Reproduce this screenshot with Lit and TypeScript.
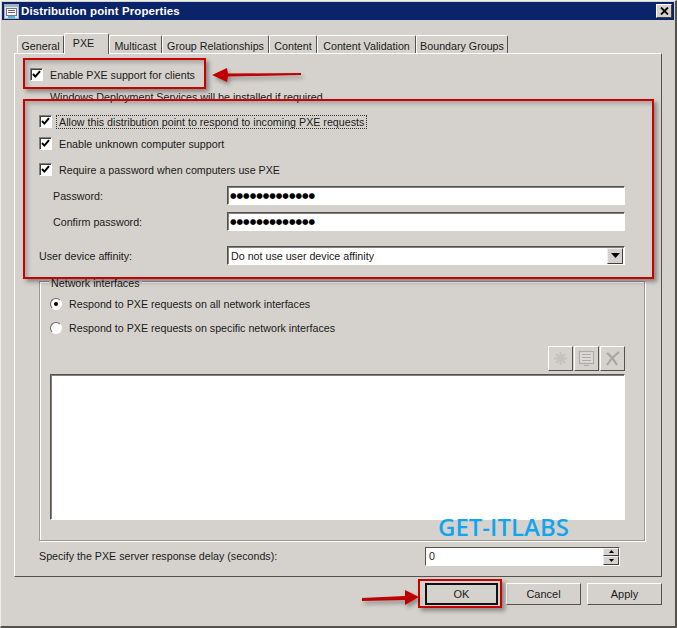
import { LitElement, html, css, svg } from "lit";
import { customElement } from "lit/decorators.js";

const check = svg`<svg viewBox="0 0 9 9" width="9" height="9"><path d="M1 4 L3.4 6.600 L8 1.200" fill="none" stroke="#000" stroke-width="2"/></svg>`;

@customElement("app-root")
export class AppRoot extends LitElement {
  static styles = css`
    :host { display: block; width: 677px; height: 628px; position: relative; overflow: hidden;
      font-family: "Liberation Sans", Arial, sans-serif; font-size: 10.7px; color: #1a1a1a; background: #d5d2cd; }
    * { box-sizing: border-box; }
    .win { height: 628px; display: flex; flex-direction: column; padding: 1px 1px 0 1px;
      border-left: 1px solid #eee; border-top: 1px solid #eee; border-right: 2px solid #55524e; border-bottom: 2px solid #55524e; }
    .title { height: 18px; flex: none; background: #0a246a; color: #fff; display: flex; align-items: center; font-weight: 700; font-size: 11.5px; letter-spacing: 0.1px; padding: 0 2px 0 2px; gap: 2px; }
    .title .sp { flex: 1; }
    .close { width: 16px; height: 14px; background: #d5d2cd; border: 1px solid; border-color: #fff #404040 #404040 #fff; display: flex; align-items: center; justify-content: center; }
    .content { flex: 1; padding: 15px 12px 0 12px; display: flex; flex-direction: column; }
    .tabs { display: flex; height: 18px; padding-left: 3px; align-items: flex-start; flex: none; position: relative; z-index: 1; }
    .tab { height: 18px; white-space: nowrap; border: 1px solid; border-color: #fff #55524e transparent #fff; border-bottom: 0; border-radius: 2px 2px 0 0; display: flex; align-items: center; justify-content: center; background: #d5d2cd; padding-top: 2px; }
    .tab.on { height: 21px; margin-top: -2px; padding: 0 6px 3px 0; }
    .panel { height: 524px; flex: none; border: 1px solid; border-color: #fff #55524e #55524e #fff; padding: 14px 16px 0 14px; display: flex; flex-direction: column; }
    .row { display: flex; align-items: center; }
    .cb { width: 13px; height: 13px; flex: none; background: #fff; border: 1px solid; border-color: #808080 #fff #fff #808080; box-shadow: inset 1px 1px 0 #404040; display: flex; align-items: center; justify-content: center; }
    .first { height: 13px; gap: 7px; margin-left: 1px; }
    .note { margin: 9px 0 0 21px; height: 14px; line-height: 14px; white-space: nowrap; }
    .sec { padding-left: 10px; margin-top: 11px; display: flex; flex-direction: column; }
    .chk { height: 13px; gap: 7px; }
    .focus { outline: 1px dotted #333; padding: 0 2px; margin-left: -2px; }
    .gap1 { height: 9px; }
    .gap2 { height: 13px; }
    .fld { height: 19px; margin-top: 7px; }
    .fld.pw { margin-top: 10px; }
    .fld.aff { margin-top: 15px; }
    .fld label { width: 188px; flex: none; }
    .fld .ind { padding: 1px 0 0 14px; }
    .inp { width: 398px; height: 19px; background: #fff; border: 1px solid; border-color: #55524e #fff #fff #55524e; box-shadow: inset 1px 1px 0 #808080; display: flex; align-items: center; padding-left: 3px; }
    .dots { font-family: "DejaVu Sans", sans-serif; font-size: 7.5px; letter-spacing: 0; padding-left: 2px; color: #000; }
    .sel { justify-content: space-between; padding-right: 1px; }
    .drop { width: 16px; height: 16px; background: #d5d2cd; border: 1px solid; border-color: #eee #404040 #404040 #eee; display: flex; align-items: center; justify-content: center; }
    .group { height: 260px; flex: none; border: 1px solid #9a9793; box-shadow: 1px 1px 0 #fff, inset 1px 1px 0 #fff; margin: 16px 0 0 10px; position: relative; padding: 15px 19px 0 10px; display: flex; flex-direction: column; }
    .legend { position: absolute; top: -5px; left: 9px; background: #d5d2cd; padding: 0 2px; line-height: 13px; }
    .radio { height: 13px; gap: 7px; }
    .rad2 { margin-top: 11px; }
    .rb { width: 12px; height: 12px; flex: none; border-radius: 50%; background: #fff; border: 1px solid; border-color: #666 #fff #fff #666; display: flex; align-items: center; justify-content: center; }
    .rb i { width: 4px; height: 4px; border-radius: 50%; background: #000; }
    .tools { display: flex; justify-content: flex-end; gap: 1px; margin-top: 12px; height: 25px; flex: none; }
    .tb { width: 25px; height: 25px; border: 1px solid; border-color: #fff #55524e #55524e #fff; display: flex; align-items: center; justify-content: center; }
    .list { height: 146px; flex: none; margin-top: 3px; background: #fff; border: 1px solid; border-color: #55524e #fff #fff #55524e; box-shadow: inset 1px 1px 0 #808080; }
    .delay { margin: 5px 0 0 10px; height: 20px; justify-content: space-between; }
    .spin { width: 195px; height: 19px; margin-right: 25px; background: #fff; border: 1px solid; border-color: #55524e #fff #fff #55524e; display: flex; align-items: center; justify-content: space-between; padding-left: 3px; }
    .arrows { width: 16px; height: 17px; display: flex; flex-direction: column; }
    .arrows span { flex: 1; background: #d5d2cd; border: 1px solid; border-color: #eee #404040 #404040 #eee; display: flex; align-items: center; justify-content: center; }
    .btns { display: flex; justify-content: flex-end; margin-top: 6px; }
    .btn { width: 75px; height: 22px; margin-left: 6px; border: 1px solid; border-color: #fff #55524e #55524e #fff; display: flex; align-items: center; justify-content: center; background: #d5d2cd; font-size: 11px; }
    .btn.def { width: 73px; margin-right: 2px; border: 2px solid #111; }
    .over { position: absolute; inset: 0; pointer-events: none; }
    .rbox { position: absolute; border: 2px solid #c80000; box-shadow: 3px 3px 4px rgba(0,0,0,.35), inset 3px 3px 4px rgba(0,0,0,.2); }
    .b1 { left: 23px; top: 58px; width: 183px; height: 31px; }
    .b2 { left: 23px; top: 99px; width: 631px; height: 180px; }
    .b3 { left: 418px; top: 579px; width: 84px; height: 29px; box-shadow: 3px 3px 4px rgba(0,0,0,.35); }
    .ovsvg { position: absolute; inset: 0; filter: drop-shadow(2px 3px 2px rgba(0,0,0,.35)); }
    .mark { position: absolute; left: 438px; top: 510px; font-size: 24px; font-weight: 600; line-height: 34px; color: #12a5ee; font-family: "Open Sans", sans-serif; }
  `;

  private chk(label: string, focus = false) {
    return html`<div class="row chk"><span class="cb">${check}</span><span class=${focus ? "focus" : ""}>${label}</span></div>`;
  }

  render() {
    const tabs: [string, number, boolean][] = [
      ["General", 47, false], ["PXE", 45, true], ["Multicast", 53, false], ["Group Relationships", 107, false],
      ["Content", 48, false], ["Content Validation", 99, false], ["Boundary Groups", 92, false],
    ];
    const dots = "●●●●●●●●●●●●●";
    return html`
      <div class="win">
        <div class="title">
          <svg width="15" height="15" viewBox="0 0 15 15"><rect x="0.500" y="0.500" width="14" height="14" fill="#e6e6e6" stroke="#aab"/><rect x="1" y="1" width="13" height="2" fill="#9db4cc"/><rect x="2.500" y="4.500" width="10" height="7" fill="#f6f6f6" stroke="#778"/><path d="M4 6.500h7M4 8.500h7" stroke="#667"/><rect x="4" y="12" width="7" height="2" fill="#4ab8dc"/></svg>
          <span>Distribution point Properties</span><span class="sp"></span>
          <span class="close"><svg width="9" height="8" viewBox="0 0 9 8"><path d="M1 0.500 L8 7.500 M8 0.500 L1 7.500" stroke="#000" stroke-width="1.800"/></svg></span>
        </div>
        <div class="content">
          <div class="tabs">
            ${tabs.map(([t, w, on]) => html`<div class="tab ${on ? "on" : ""}" style="width:${w}px">${t}</div>`)}
          </div>
          <div class="panel">
            <div class="row first"><span class="cb">${check}</span><span>Enable PXE support for clients</span></div>
            <div class="note">Windows Deployment Services will be installed if required</div>
            <div class="sec">
              ${this.chk("Allow this distribution point to respond to incoming PXE requests", true)}
              <div class="gap1"></div>
              ${this.chk("Enable unknown computer support")}
              <div class="gap2"></div>
              ${this.chk("Require a password when computers use PXE")}
              <div class="row fld pw"><label class="ind">Password:</label><div class="inp dots">${dots}</div></div>
              <div class="row fld"><label class="ind">Confirm password:</label><div class="inp dots">${dots}</div></div>
              <div class="row fld aff"><label>User device affinity:</label><div class="inp sel"><span>Do not use user device affinity</span>
                <span class="drop"><svg width="9" height="5" viewBox="0 0 9 5"><path d="M0 0h9L4.500 5z" fill="#000"/></svg></span></div></div>
            </div>
            <div class="group">
              <div class="legend">Network interfaces</div>
              <div class="row radio"><span class="rb"><i></i></span><span>Respond to PXE requests on all network interfaces</span></div>
              <div class="row radio rad2"><span class="rb"></span><span>Respond to PXE requests on specific network interfaces</span></div>
              <div class="tools">
                <span class="tb"><svg width="17" height="17" viewBox="0 0 17 17"><path d="M8.500 2v13M2 8.500h13M4 4l9 9M13 4L4 13" stroke="#c4c2bd" stroke-width="2"/></svg></span>
                <span class="tb"><svg width="17" height="17" viewBox="0 0 17 17"><rect x="1.500" y="1.500" width="14" height="12" fill="#dcdad6" stroke="#aeaca8" stroke-width="1.200"/><path d="M4 4.500h9M4 7.500h9M4 10.500h9" stroke="#aeaca8" stroke-width="1.200"/><path d="M6 15.500h5" stroke="#aeaca8"/></svg></span>
                <span class="tb"><svg width="17" height="17" viewBox="0 0 17 17"><path d="M3 3c4 3 7 7 10 12M15 2C10 6 6 10 3 15" fill="none" stroke="#a9a7a3" stroke-width="2.200"/></svg></span>
              </div>
              <div class="list"></div>
            </div>
            <div class="row delay"><span>Specify the PXE server response delay (seconds):</span>
              <div class="spin"><span>0</span><span class="arrows">
                <span><svg width="5" height="3" viewBox="0 0 5 3"><path d="M0 3h5L2.500 0z" fill="#000"/></svg></span>
                <span><svg width="5" height="3" viewBox="0 0 5 3"><path d="M0 0h5L2.500 3z" fill="#000"/></svg></span>
              </span></div>
            </div>
          </div>
          <div class="btns">
            <div class="btn def">OK</div><div class="btn">Cancel</div><div class="btn">Apply</div>
          </div>
        </div>
      </div>
      <div class="over">
        <div class="rbox b1"></div><div class="rbox b2"></div><div class="rbox b3"></div>
        <svg class="ovsvg" width="677" height="628" viewBox="0 0 677 628">
          <path d="M301 73 L228 73.500 L227 68 L212 75 L227 82 L228 76.500 L301 75 Z" fill="#c00000"/>
          <path d="M362 598 L405 596 L405 590 L419 597 L405 605 L405 600 L362 601 Z" fill="#c00000"/>
        </svg>
        <div class="mark">GET-ITLABS</div>
      </div>
    `;
  }
}
